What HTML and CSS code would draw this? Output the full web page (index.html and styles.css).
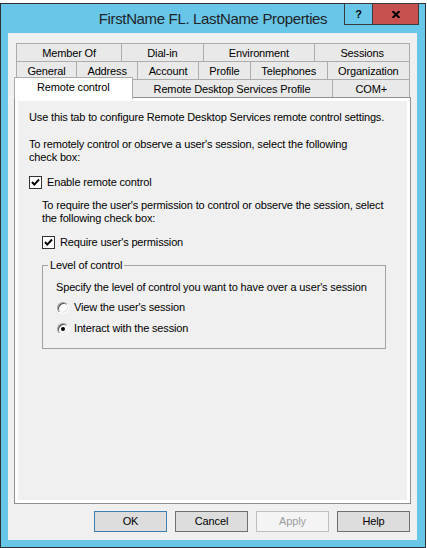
FILE: index.html
```html
<!DOCTYPE html>
<html>
<head>
<meta charset="utf-8">
<title>FirstName FL. LastName Properties</title>
<link rel="stylesheet" href="styles.css">
</head>
<body>
<div class="window">
  <div class="titlebar">
    <div class="title">FirstName FL. LastName Properties</div>
    <div class="caption-buttons">
      <div class="cap-btn cap-help">?</div>
      <div class="cap-btn cap-close">
        <svg width="8" height="7" viewBox="0 0 8 7"><path d="M0.5 0 L7.5 7 M7.5 0 L0.5 7" stroke="#000" stroke-width="2" fill="none"/></svg>
      </div>
    </div>
  </div>
  <div class="client">
    <div class="tabs">
      <div class="tab-row">
        <div class="tab">Member Of</div>
        <div class="tab">Dial-in</div>
        <div class="tab">Environment</div>
        <div class="tab">Sessions</div>
      </div>
      <div class="tab-row">
        <div class="tab">General</div>
        <div class="tab">Address</div>
        <div class="tab">Account</div>
        <div class="tab">Profile</div>
        <div class="tab">Telephones</div>
        <div class="tab">Organization</div>
      </div>
      <div class="tab-row">
        <div class="tab selected">Remote control</div>
        <div class="tab">Remote Desktop Services Profile</div>
        <div class="tab">COM+</div>
      </div>
    </div>
    <div class="panel">
      <p class="intro">Use this tab to configure Remote Desktop Services remote control settings.</p>
      <p class="para">To remotely control or observe a user's session, select the following<br>check box:</p>
      <div class="check-row first-check">
        <span class="checkbox checked"><svg width="11" height="11" viewBox="0 0 11 11"><path d="M2 5 L4.3 7.6 L9 2.5" stroke="#000" stroke-width="2" fill="none"/></svg></span>
        <span class="label">Enable remote control</span>
      </div>
      <div class="indent">
        <p class="para sub">To require the user's permission to control or observe the session, select<br>the following check box:</p>
        <div class="check-row">
          <span class="checkbox checked"><svg width="11" height="11" viewBox="0 0 11 11"><path d="M2 5 L4.3 7.6 L9 2.5" stroke="#000" stroke-width="2" fill="none"/></svg></span>
          <span class="label">Require user's permission</span>
        </div>
        <fieldset class="group">
          <legend>Level of control</legend>
          <div class="group-text">Specify the level of control you want to have over a user's session</div>
          <div class="radio-list">
            <div class="radio-row"><span class="radio"></span><span class="label">View the user's session</span></div>
            <div class="radio-row"><span class="radio on"></span><span class="label">Interact with the session</span></div>
          </div>
        </fieldset>
      </div>
    </div>
    <div class="buttons">
      <div class="btn default">OK</div>
      <div class="btn">Cancel</div>
      <div class="btn disabled">Apply</div>
      <div class="btn">Help</div>
    </div>
  </div>
</div>
</body>
</html>
```
FILE: styles.css
```css
html, body {
  margin: 0;
  padding: 0;
  background: #ffffff;
  overflow: hidden;
}

body {
  font-family: "Liberation Sans", Arial, sans-serif;
  font-size: 11px;
  letter-spacing: -0.15px;
  color: #000;
}

.window {
  width: 426px;
  height: 545px;
  margin-top: 3px;
  box-sizing: border-box;
  border: 1px solid #2f3235;
  background: #68c7e9;
  display: flex;
  flex-direction: column;
}

.titlebar {
  height: 29px;
  flex: none;
  display: grid;
  grid-template-columns: 1fr auto 1fr;
}

.title {
  grid-column: 2;
  font-size: 15px;
  letter-spacing: -0.35px;
  line-height: 28px;
  padding-top: 1px;
  color: #1f2326;
  white-space: nowrap;
}

.caption-buttons {
  grid-column: 3;
  justify-self: end;
  align-self: start;
  display: flex;
  height: 22px;
  box-sizing: border-box;
  margin-top: -1px;
  margin-right: 6px;
  border: 1px solid #3b3b3b;
}

.cap-btn {
  display: flex;
  align-items: center;
  justify-content: center;
}

.cap-help {
  width: 27px;
  border-right: 1px solid #3b3b3b;
  font-weight: bold;
  font-size: 11px;
  letter-spacing: 0;
  line-height: 20px;
}

.cap-close {
  width: 45px;
  background: #c75050;
}

.cap-close svg {
  display: block;
}

.client {
  flex: 1;
  margin: 0 8px 7px 7px;
  background: #f0f0f0;
  padding: 10px 6px 0;
  display: flex;
  flex-direction: column;
  min-height: 0;
}

.tabs {
  margin: 0 1px 0 2px;
  flex: none;
}

.tab-row {
  display: flex;
  height: 18px;
}

.tab {
  flex: 1 1 auto;
  height: 18px;
  box-sizing: border-box;
  border-top: 1px solid #acacac;
  border-left: 1px solid #acacac;
  background: #e9e9e9;
  text-align: center;
  padding-top: 1px;
  line-height: 16px;
  white-space: nowrap;
}

.tab:last-child {
  border-right: 1px solid #acacac;
}

.tab.selected {
  background: #ffffff;
  border: 1px solid #acacac;
  border-bottom: none;
  height: 22px;
  margin: -2px -2px 0 -2px;
  position: relative;
  z-index: 1;
}

.panel {
  flex: 1;
  box-sizing: border-box;
  border: 1px solid #8e8f8f;
  background: #f0f0f0;
  box-shadow: inset 0 0 0 3px #ffffff;
  padding: 13px 14px;
  line-height: 13px;
}

.panel p {
  margin: 0;
  white-space: nowrap;
}

.para {
  margin-top: 14px !important;
}

.para.sub {
  margin-top: 10px !important;
}

.check-row {
  display: flex;
  align-items: center;
  height: 13px;
  margin-top: 11px;
  white-space: nowrap;
}

.check-row.first-check {
  margin-top: 12px;
}

.checkbox {
  width: 13px;
  height: 13px;
  box-sizing: border-box;
  border: 1px solid #333333;
  background: #ffffff;
  margin-right: 5px;
  display: flex;
  align-items: center;
  justify-content: center;
  flex: none;
}

.checkbox svg {
  display: block;
}

.indent {
  margin-left: 13px;
}

.group {
  width: 344px;
  box-sizing: border-box;
  margin: 10px 0 0 0;
  border: 1px solid #a0a0a0;
  padding: 9px 0 13px 13px;
  min-width: 0;
}

.group legend {
  padding: 0 2px;
  margin-left: -8px;
  line-height: 13px;
}

.group-text {
  white-space: nowrap;
}

.radio-list {
  display: flex;
  flex-direction: column;
  gap: 8px;
  margin-top: 7px;
}

.radio-row {
  display: flex;
  align-items: center;
  height: 13px;
  white-space: nowrap;
}

.radio {
  width: 12px;
  height: 12px;
  box-sizing: border-box;
  border-radius: 50%;
  border: 1px solid;
  border-color: #a0a0a0 #ffffff #ffffff #a0a0a0;
  box-shadow: inset 1px 1px 0 #505050, inset -1px -1px 0 #e3e3e3;
  background: #ffffff;
  margin: 0 5px 0 1px;
  flex: none;
  display: flex;
  align-items: center;
  justify-content: center;
}

.radio.on::after {
  content: "";
  width: 4px;
  height: 4px;
  border-radius: 50%;
  background: #000;
}

.buttons {
  flex: none;
  display: flex;
  justify-content: flex-end;
  gap: 8px;
  padding: 7px 1px 8px 0;
}

.btn {
  width: 73px;
  height: 21px;
  box-sizing: border-box;
  border: 1px solid #707070;
  background: #dddddd;
  text-align: center;
  line-height: 19px;
}

.btn.default {
  border-color: #3c7fb1;
}

.btn.disabled {
  border-color: #bfbfbf;
  background: #f4f4f4;
  color: #9d9d9d;
}
```
